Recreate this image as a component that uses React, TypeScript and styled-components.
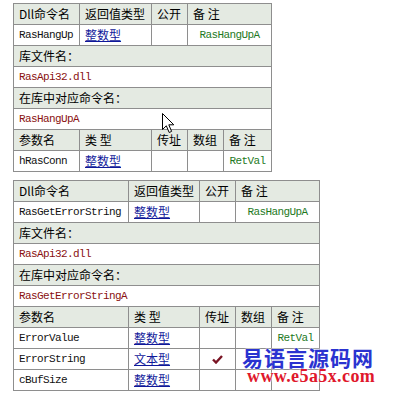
import React from 'react'
import styled, { createGlobalStyle } from 'styled-components'

const GlobalStyle = createGlobalStyle`
	html, body {
		margin: 0;
		background: #fff;
	}
	body {
		font-family: 'Noto Sans CJK SC', 'DejaVu Sans', sans-serif;
		font-size: 12px;
		color: #000;
	}
`

type TParam = {
	name: string
	type: string
	byRef?: boolean
	note?: string
}

type TDll = {
	cmd: string
	ret: string
	note: string
	lib: string
	entry: string
	cols: string
	paramCols: string
	params: TParam[]
}

const dlls: TDll[] = [
	{
		cmd: 'RasHangUp',
		ret: '整数型',
		note: 'RasHangUpA',
		lib: 'RasApi32.dll',
		entry: 'RasHangUpA',
		cols: '66px 72px 36px 84px',
		paramCols: '66px 72px 36px 36px 48px',
		params: [{ name: 'hRasConn', type: '整数型', note: 'RetVal' }],
	},
	{
		cmd: 'RasGetErrorString',
		ret: '整数型',
		note: 'RasHangUpA',
		lib: 'RasApi32.dll',
		entry: 'RasGetErrorStringA',
		cols: '115px 71px 36px 84px',
		paramCols: '115px 71px 36px 36px 48px',
		params: [
			{ name: 'ErrorValue', type: '整数型', note: 'RetVal' },
			{ name: 'ErrorString', type: '文本型', byRef: true },
			{ name: 'cBufSize', type: '整数型' },
		],
	},
]

const App = () => {
	return (
		<>
			<GlobalStyle />
			<Page>
				{dlls.map((dll) => (
					<Table key={dll.cmd}>
						<Row $cols={dll.cols} $head>
							<Cell>Dll命令名</Cell>
							<Cell>返回值类型</Cell>
							<Cell>公开</Cell>
							<Cell>备 注</Cell>
						</Row>
						<Row $cols={dll.cols}>
							<Cell>
								<Code>{dll.cmd}</Code>
							</Cell>
							<Cell>
								<TypeLink>{dll.ret}</TypeLink>
							</Cell>
							<Cell />
							<Cell $center>
								<Code $color="#1e7a1e">{dll.note}</Code>
							</Cell>
						</Row>
						<Row $cols="1fr" $head>
							<Cell>库文件名：</Cell>
						</Row>
						<Row $cols="1fr">
							<Cell>
								<Code $color="#8a1010">{dll.lib}</Code>
							</Cell>
						</Row>
						<Row $cols="1fr" $head>
							<Cell>在库中对应命令名：</Cell>
						</Row>
						<Row $cols="1fr">
							<Cell>
								<Code $color="#8a1010">{dll.entry}</Code>
							</Cell>
						</Row>
						<Row $cols={dll.paramCols} $head>
							<Cell>参数名</Cell>
							<Cell>类 型</Cell>
							<Cell>传址</Cell>
							<Cell>数组</Cell>
							<Cell>备 注</Cell>
						</Row>
						{dll.params.map((p) => (
							<Row $cols={dll.paramCols} key={p.name}>
								<Cell>
									<Code>{p.name}</Code>
								</Cell>
								<Cell>
									<TypeLink>{p.type}</TypeLink>
								</Cell>
								<Cell $center>
									{p.byRef && (
										<svg width="11" height="9" viewBox="0 0 11 9">
											<path
												d="M1 4.5 L4 7.5 L10 1"
												fill="none"
												stroke="#7a1424"
												strokeWidth="2.4"
											/>
										</svg>
									)}
								</Cell>
								<Cell />
								<Cell $center>
									{p.note && <Code $color="#1e7a1e">{p.note}</Code>}
								</Cell>
							</Row>
						))}
					</Table>
				))}

				<Cursor width="13" height="21" viewBox="0 0 13 21">
					<path
						d="M0.5 0.5 L0.5 16.5 L4.3 12.8 L7.2 19.5 L9.6 18.4 L6.8 11.8 L11.8 11.8 Z"
						fill="#fff"
						stroke="#000"
						strokeWidth="1"
						strokeLinejoin="miter"
					/>
				</Cursor>

				<Watermark>
					<SiteName>易语言源码网</SiteName>
					<SiteUrl>www.e5a5x.com</SiteUrl>
				</Watermark>
			</Page>
		</>
	)
}

export default App

const Page = styled.div`
	position: relative;
	width: 401px;
	height: 393px;
	box-sizing: border-box;
	padding: 3px 0 0 13px;
	display: flex;
	flex-direction: column;
	gap: 8px;
	overflow: hidden;
`

const Table = styled.div`
	display: flex;
	flex-direction: column;
	width: fit-content;
	border-left: 1px solid #8e8e8e;
	border-top: 1px solid #8e8e8e;
`

const Row = styled.div<{ $cols: string; $head?: boolean }>`
	display: grid;
	grid-template-columns: ${(p) => p.$cols};
	background: ${(p) => (p.$head ? '#e4eae2' : '#fff')};
`

const Cell = styled.div<{ $center?: boolean }>`
	height: 21px;
	box-sizing: border-box;
	border-right: 1px solid #8e8e8e;
	border-bottom: 1px solid #8e8e8e;
	padding: 0 5px;
	display: flex;
	align-items: center;
	justify-content: ${(p) => (p.$center ? 'center' : 'flex-start')};
	white-space: nowrap;
	line-height: 1;
`

const Code = styled.span<{ $color?: string }>`
	font-family: 'Liberation Mono', 'DejaVu Sans Mono', monospace;
	font-size: 11px;
	letter-spacing: -0.6px;
	color: ${(p) => p.$color || '#111'};
`

const TypeLink = styled.a`
	color: #10189a;
	text-decoration: underline;
	cursor: pointer;
`

const Cursor = styled.svg`
	position: absolute;
	left: 162px;
	top: 113px;
`

const Watermark = styled.div`
	position: absolute;
	left: 242px;
	top: 344px;
	display: flex;
	flex-direction: column;
	align-items: flex-start;
`

const SiteName = styled.div`
	font-family: 'Noto Sans CJK SC', sans-serif;
	font-weight: 700;
	font-size: 21px;
	line-height: 26px;
	letter-spacing: 1px;
	color: #2a33d0;
	text-shadow: 0 0 2px #fff, 0 0 2px #fff;
`

const SiteUrl = styled.div`
	margin-top: -2px;
	margin-left: 5px;
	font-family: 'Liberation Serif', serif;
	font-weight: 700;
	font-size: 18px;
	line-height: 16px;
	letter-spacing: 0.4px;
	color: #e0182c;
	text-shadow: 0 0 2px #fff, 0 0 2px #fff;
`
